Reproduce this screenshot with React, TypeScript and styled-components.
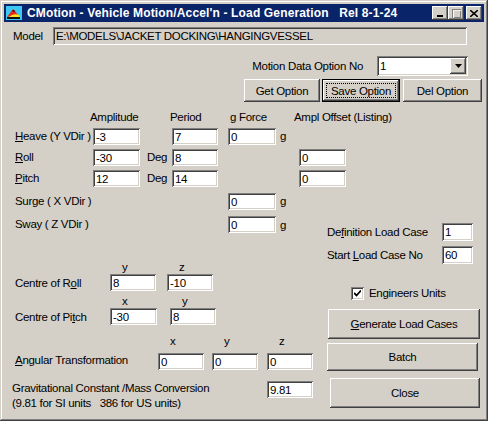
import React from "react";
import styled, { createGlobalStyle } from "styled-components";

const uiFont = `"Liberation Sans", Arial, sans-serif`;

const raised = `inset -1px -1px #404040, inset 1px 1px #ffffff, inset -2px -2px #808080, inset 2px 2px #d4d0c8`;
const sunken = `inset 1px 1px #808080, inset -1px -1px #ffffff, inset 2px 2px #404040, inset -2px -2px #d4d0c8`;

const GlobalStyle = createGlobalStyle`
  html, body {
    margin: 0;
    padding: 0;
    background: #ffffff;
  }
  body {
    width: 490px;
    height: 422px;
    overflow: hidden;
  }
`;

const Window = styled.div`
  width: 488px;
  height: 421px;
  box-sizing: border-box;
  padding: 4px;
  background: #d4d0c8;
  box-shadow: inset -1px -1px #404040, inset 1px 1px #d4d0c8,
    inset -2px -2px #808080, inset 2px 2px #ffffff;
  font-family: ${uiFont};
  font-size: 11.5px;
  letter-spacing: -0.3px;
  color: #000;
  display: flex;
  flex-direction: column;
`;

const TitleBar = styled.div`
  height: 18px;
  background: #0a246a;
  display: flex;
  align-items: center;
  padding: 0 2px;
`;

const TitleText = styled.span`
  flex: 1;
  margin-left: 5px;
  color: #fff;
  font-family: "Liberation Sans", Arial, sans-serif;
  font-weight: bold;
  font-size: 12px;
  letter-spacing: 0.15px;
  white-space: pre;
`;

const CaptionButton = styled.button<{ $gap?: number }>`
  width: 16px;
  height: 14px;
  padding: 0;
  margin-left: ${(p) => p.$gap ?? 0}px;
  border: none;
  background: #d4d0c8;
  box-shadow: ${raised};
  display: flex;
  align-items: center;
  justify-content: center;
`;

const Body = styled.div`
  flex: 1;
  padding: 0 2px 0 8px;
  display: flex;
  flex-direction: column;
`;

const Label = styled.span<{ $w?: number; $ml?: number }>`
  display: inline-block;
  width: ${(p) => (p.$w ? `${p.$w}px` : "auto")};
  margin-left: ${(p) => p.$ml ?? 0}px;
  flex-shrink: 0;
  line-height: 17px;
  white-space: nowrap;
`;

const TextBox = styled.input<{ $w?: number; $h?: number; $grey?: boolean }>`
  box-sizing: border-box;
  width: ${(p) => (p.$w ? `${p.$w}px` : "100%")};
  height: ${(p) => p.$h ?? 17}px;
  flex-shrink: 0;
  margin: 0;
  padding: 0 0 0 3px;
  border: none;
  outline: none;
  background: ${(p) => (p.$grey ? "#d4d0c8" : "#ffffff")};
  box-shadow: ${sunken};
  font-family: ${uiFont};
  font-size: 11.5px;
  letter-spacing: -0.3px;
  color: #000;
`;

const ModelRow = styled.div`
  margin-top: 5px;
  display: flex;
  align-items: center;
`;

const OptionRow = styled.div`
  margin-top: 11px;
  display: flex;
  justify-content: flex-end;
  align-items: center;
  gap: 14px;
  padding-right: 14px;
`;

const Combo = styled.div`
  position: relative;
  box-sizing: border-box;
  width: 91px;
  height: 20px;
  background: #fff;
  box-shadow: ${sunken};
  padding-left: 3px;
  line-height: 20px;
`;

const ComboButton = styled.span`
  position: absolute;
  right: 2px;
  top: 2px;
  width: 16px;
  height: 16px;
  background: #d4d0c8;
  box-shadow: ${raised};
  display: flex;
  align-items: center;
  justify-content: center;
`;

const ButtonRow = styled.div`
  margin-top: 3px;
  display: flex;
  justify-content: flex-end;
`;

const PushButton = styled.button<{
  $w: number;
  $h?: number;
  $ml?: number;
  $mt?: number;
  $default?: boolean;
}>`
  position: relative;
  box-sizing: border-box;
  width: ${(p) => p.$w}px;
  height: ${(p) => p.$h ?? 23}px;
  margin: ${(p) => p.$mt ?? 0}px 0 0 ${(p) => p.$ml ?? 0}px;
  padding: 0;
  background: #d4d0c8;
  border: ${(p) => (p.$default ? "1px solid #000" : "none")};
  box-shadow: ${raised};
  font-family: ${uiFont};
  font-size: 11.5px;
  letter-spacing: -0.3px;
  color: #000;
  &::after {
    content: "";
    display: ${(p) => (p.$default ? "block" : "none")};
    position: absolute;
    inset: 3px;
    border: 1px dotted #000;
  }
`;

const MotionGrid = styled.div`
  margin: 8px 0 0 3px;
  display: grid;
  grid-template-columns: 78px 47px 32px 46px 10px 48px 23px 47px;
  grid-template-rows: 18px 21px 21px 23px 23px;
  align-items: start;
`;

const Cell = styled.div<{ $col: number; $row: number; $shift?: number }>`
  grid-column: ${(p) => p.$col};
  grid-row: ${(p) => p.$row};
  margin-left: ${(p) => p.$shift ?? 0}px;
  line-height: 17px;
  white-space: nowrap;
`;

const Heading = styled(Cell)`
  line-height: 15px;
`;

const LowerArea = styled.div`
  display: flex;
`;

const LeftColumn = styled.div`
  width: 315px;
  display: flex;
  flex-direction: column;
`;

const RightColumn = styled.div`
  width: 155px;
  display: flex;
  flex-direction: column;
`;

const SimpleRow = styled.div<{ $ml?: number; $mt?: number }>`
  margin: ${(p) => p.$mt ?? 0}px 0 0 ${(p) => p.$ml ?? 0}px;
  display: flex;
  align-items: center;
`;

const Unit = styled.span`
  padding-left: 4px;
`;

const CoordRow = styled.div<{ $mt: number }>`
  margin: ${(p) => p.$mt}px 0 0 3px;
  display: flex;
  align-items: flex-end;
`;

const CoordLabel = styled(Label)<{ $drop?: number }>`
  margin-bottom: ${(p) => p.$drop ?? -1}px;
`;

const FieldStack = styled.div<{ $ml?: number }>`
  margin-left: ${(p) => p.$ml ?? 0}px;
  display: flex;
  flex-direction: column;
`;

const AxisHead = styled.span<{ $gap?: number }>`
  line-height: 14px;
  padding-left: 12px;
  margin-bottom: ${(p) => p.$gap ?? 0}px;
`;

const GravRow = styled.div`
  margin-top: 11px;
  display: flex;
  align-items: flex-start;
`;

const GravText = styled.div`
  width: 255px;
  line-height: 15px;
`;

const CheckRow = styled.label`
  margin: 22px 0 0 24px;
  display: flex;
  align-items: center;
  gap: 5px;
  line-height: 15px;
`;

const CheckBox = styled.span`
  box-sizing: border-box;
  width: 13px;
  height: 13px;
  background: #fff;
  box-shadow: ${sunken};
  display: flex;
  align-items: center;
  justify-content: center;
`;

const AppIcon = () => (
  <svg width="16" height="16" viewBox="0 0 16 16">
    <rect x="0" y="1" width="16" height="14" fill="#3cc8f4" />
    <path d="M1 12 L7 4 L9 6 L12 10 Z" fill="#e8281c" />
    <path d="M3 12 Q7 8 13 10 L14 12 Z" fill="#f8e418" />
    <path d="M6 6 L8 5 L9 7 Z" fill="#000" />
    <rect x="1" y="12" width="13" height="2" fill="#101010" />
  </svg>
);

const MinGlyph = () => (
  <svg width="8" height="8" viewBox="0 0 8 8">
    <rect x="1" y="6" width="6" height="2" fill="#000" />
  </svg>
);

const MaxGlyph = () => (
  <svg width="9" height="9" viewBox="0 0 9 9">
    <rect x="0.5" y="0.5" width="8" height="8" fill="none" stroke="#808080" />
    <rect x="0" y="1" width="9" height="1" fill="#808080" />
    <rect x="1.5" y="1.5" width="8" height="8" fill="none" stroke="#ffffff" strokeOpacity="0.9" />
  </svg>
);

const CloseGlyph = () => (
  <svg width="8" height="7" viewBox="0 0 8 7">
    <path d="M0 0 L8 7 M8 0 L0 7" stroke="#000" strokeWidth="1.6" />
  </svg>
);

const DownArrow = () => (
  <svg width="7" height="4" viewBox="0 0 7 4">
    <path d="M0 0 H7 L3.5 4 Z" fill="#000" />
  </svg>
);

const Tick = () => (
  <svg width="7" height="7" viewBox="0 0 7 7">
    <path d="M0 3 L2.5 5.5 L7 0.5" fill="none" stroke="#000" strokeWidth="1.8" />
  </svg>
);

const Box = ({ v, w, h, grey }: { v: string; w?: number; h?: number; grey?: boolean }) => (
  <TextBox readOnly defaultValue={v} $w={w} $h={h} $grey={grey} />
);

export default function App() {
  return (
    <>
      <GlobalStyle />
      <Window>
        <TitleBar>
          <AppIcon />
          <TitleText>{"CMotion - Vehicle Motion/Accel'n - Load Generation   Rel 8-1-24"}</TitleText>
          <CaptionButton>
            <MinGlyph />
          </CaptionButton>
          <CaptionButton>
            <MaxGlyph />
          </CaptionButton>
          <CaptionButton $gap={2}>
            <CloseGlyph />
          </CaptionButton>
        </TitleBar>

        <Body>
          <ModelRow>
            <Label $w={40} $ml={1}>Model</Label>
            <Box v="E:\MODELS\JACKET DOCKING\HANGINGVESSEL" w={414} h={18} grey />
          </ModelRow>

          <OptionRow>
            <Label>Motion Data Option No</Label>
            <Combo>
              1
              <ComboButton>
                <DownArrow />
              </ComboButton>
            </Combo>
          </OptionRow>

          <ButtonRow>
            <PushButton $w={76}>Get Option</PushButton>
            <PushButton $w={78} $ml={2} $default>
              Save Option
            </PushButton>
            <PushButton $w={79} $ml={3}>
              Del Option
            </PushButton>
          </ButtonRow>

          <MotionGrid>
            <Heading $col={2} $row={1} $shift={-3}>Amplitude</Heading>
            <Heading $col={4} $row={1} $shift={-2}>Period</Heading>
            <Heading $col={6} $row={1} $shift={2}>g Force</Heading>
            <Heading $col={8} $row={1} $shift={-5}>Ampl Offset (Listing)</Heading>

            <Cell $col={1} $row={2}>
              <u>H</u>eave (Y VDir )
            </Cell>
            <Cell $col={2} $row={2}><Box v="-3" /></Cell>
            <Cell $col={4} $row={2}><Box v="7" /></Cell>
            <Cell $col={6} $row={2}><Box v="0" /></Cell>
            <Cell $col={7} $row={2} $shift={4}>g</Cell>

            <Cell $col={1} $row={3}>
              <u>R</u>oll
            </Cell>
            <Cell $col={2} $row={3}><Box v="-30" /></Cell>
            <Cell $col={3} $row={3} $shift={7}>Deg</Cell>
            <Cell $col={4} $row={3}><Box v="8" /></Cell>
            <Cell $col={8} $row={3}><Box v="0" /></Cell>

            <Cell $col={1} $row={4}>
              <u>P</u>itch
            </Cell>
            <Cell $col={2} $row={4}><Box v="12" /></Cell>
            <Cell $col={3} $row={4} $shift={7}>Deg</Cell>
            <Cell $col={4} $row={4}><Box v="14" /></Cell>
            <Cell $col={8} $row={4}><Box v="0" /></Cell>

            <Cell $col={1} $row={5}>Surge ( X VDir )</Cell>
            <Cell $col={6} $row={5}><Box v="0" /></Cell>
            <Cell $col={7} $row={5} $shift={4}>g</Cell>
          </MotionGrid>

          <LowerArea>
            <LeftColumn>
              <SimpleRow $ml={3}>
                <Label $w={213}>Sway ( Z VDir )</Label>
                <Box v="0" w={48} />
                <Unit>g</Unit>
              </SimpleRow>

              <CoordRow $mt={27}>
                <CoordLabel $w={95}>
                  Centre of R<u>o</u>ll
                </CoordLabel>
                <FieldStack>
                  <AxisHead>y</AxisHead>
                  <Box v="8" w={46} />
                </FieldStack>
                <FieldStack $ml={11}>
                  <AxisHead>z</AxisHead>
                  <Box v="-10" w={46} />
                </FieldStack>
              </CoordRow>

              <CoordRow $mt={3}>
                <CoordLabel $w={95}>
                  Centre of Pi<u>t</u>ch
                </CoordLabel>
                <FieldStack>
                  <AxisHead>x</AxisHead>
                  <Box v="-30" w={47} />
                </FieldStack>
                <FieldStack $ml={13}>
                  <AxisHead>y</AxisHead>
                  <Box v="8" w={46} />
                </FieldStack>
              </CoordRow>

              <CoordRow $mt={9}>
                <CoordLabel $w={143} $drop={1}>
                  <u>A</u>ngular Transformation
                </CoordLabel>
                <FieldStack>
                  <AxisHead $gap={5}>x</AxisHead>
                  <Box v="0" w={46} />
                </FieldStack>
                <FieldStack $ml={8}>
                  <AxisHead $gap={5}>y</AxisHead>
                  <Box v="0" w={46} />
                </FieldStack>
                <FieldStack $ml={9}>
                  <AxisHead $gap={5}>z</AxisHead>
                  <Box v="0" w={46} />
                </FieldStack>
              </CoordRow>

              <GravRow>
                <GravText>
                  Gravitational Constant /Mass Conversion
                  <br />
                  (9.81 for SI units&nbsp;&nbsp;&nbsp;386 for US units)
                </GravText>
                <Box v="9.81" w={46} />
              </GravRow>
            </LeftColumn>

            <RightColumn>
              <SimpleRow $mt={7}>
                <Label $w={115}>
                  De<u>f</u>inition Load Case
                </Label>
                <Box v="1" w={31} h={18} />
              </SimpleRow>
              <SimpleRow $mt={5}>
                <Label $w={115}>
                  Start <u>L</u>oad Case No
                </Label>
                <Box v="60" w={31} h={18} />
              </SimpleRow>

              <CheckRow>
                <CheckBox>
                  <Tick />
                </CheckBox>
                Engineers Units
              </CheckRow>

              <PushButton $w={152} $h={30} $ml={1} $mt={8}>
                <u>G</u>enerate Load Cases
              </PushButton>
              <PushButton $w={151} $h={28} $mt={4}>
                Batch
              </PushButton>
              <PushButton $w={150} $h={30} $ml={3} $mt={7}>
                Close
              </PushButton>
            </RightColumn>
          </LowerArea>
        </Body>
      </Window>
    </>
  );
}
